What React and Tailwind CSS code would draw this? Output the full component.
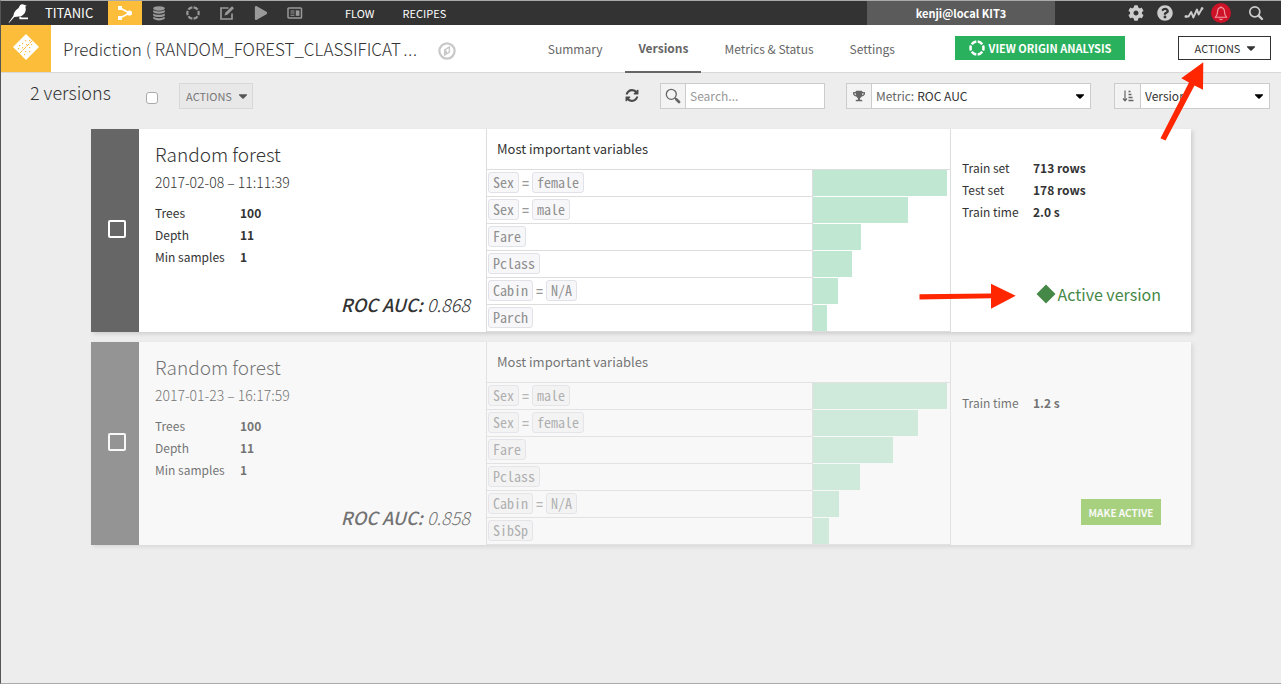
import React from "react";
import { FaTrophy, FaQuestionCircle, FaCog, FaPlay, FaCaretDown } from "react-icons/fa";

const versions = [
  {
    id: "v2",
    name: "Random forest",
    date: "2017-02-08 – 11:11:39",
    params: [["Trees", "100"], ["Depth", "11"], ["Min samples", "1"]],
    score: "0.868",
    active: true,
    training: [["Train set", "713 rows"], ["Test set", "178 rows"], ["Train time", "2.0 s"]],
    variables: [
      { name: "Sex", value: "female", size: 98 },
      { name: "Sex", value: "male", size: 69.5 },
      { name: "Fare", size: 35 },
      { name: "Pclass", size: 28.5 },
      { name: "Cabin", value: "N/A", size: 18.5 },
      { name: "Parch", size: 10.5 },
    ],
  },
  {
    id: "v1",
    name: "Random forest",
    date: "2017-01-23 – 16:17:59",
    params: [["Trees", "100"], ["Depth", "11"], ["Min samples", "1"]],
    score: "0.858",
    active: false,
    training: [["Train time", "1.2 s"]],
    variables: [
      { name: "Sex", value: "male", size: 98 },
      { name: "Sex", value: "female", size: 76.5 },
      { name: "Fare", size: 58.5 },
      { name: "Pclass", size: 34.5 },
      { name: "Cabin", value: "N/A", size: 19 },
      { name: "SibSp", size: 12 },
    ],
  },
];

function BirdLogo() {
  return (
    <svg viewBox="0 0 22 20" className="h-5 w-[22px]" fill="#fff" aria-hidden="true">
      <path d="M0.500 19.800 L5.400 12.800 C5.700 9.800 7 7.600 10.300 5.200 C11.600 4.200 11.400 1.300 14.200 1.200 C15.600 1.100 16.300 1.900 18.900 2.700 L17.300 3.600 C18.600 7.500 17.300 11 13.200 13.200 L6.300 13.900 L1.200 19.800 Z" />
      <path d="M12.200 13.500 L13.500 14.600 L20 14.600 L20 16.300 L11.400 16.300 L11.400 13.800 Z" />
    </svg>
  );
}

function FlowIcon() {
  return (
    <svg viewBox="0 0 16 16" className="size-4" fill="#fff" aria-hidden="true">
      <path d="M3 3 L12.500 8 L3 13" fill="none" stroke="#fff" strokeWidth="1.600" />
      <rect x="1" y="1" width="4" height="4" />
      <rect x="1" y="11" width="4" height="4" />
      <circle cx="12.500" cy="8" r="2.600" />
    </svg>
  );
}

function DatasetIcon() {
  return (
    <svg viewBox="0 0 14 16" className="h-[15px] w-3.5" fill="currentColor" aria-hidden="true">
      <ellipse cx="7" cy="2.600" rx="6.200" ry="2.400" />
      <path d="M0.800 4.300 C3 6.300 11 6.300 13.200 4.300 V6.400 C11.500 8.800 2.500 8.800 0.800 6.400 Z" />
      <path d="M0.800 7.900 C3 9.900 11 9.900 13.200 7.900 V10 C11.500 12.400 2.500 12.400 0.800 10 Z" />
      <path d="M0.800 11.500 C3 13.500 11 13.500 13.200 11.500 V13.400 C11.500 16 2.500 16 0.800 13.400 Z" />
    </svg>
  );
}

function AnalysisIcon({ className }) {
  return (
    <svg viewBox="0 0 16 16" className={className} fill="none" stroke="currentColor" aria-hidden="true">
      <circle cx="8" cy="8" r="6.500" strokeWidth="2.500" pathLength="60" strokeDasharray="7.800 2.200" strokeDashoffset="-6.100" />
    </svg>
  );
}

function NotebookIcon() {
  return (
    <svg viewBox="0 0 16 16" className="size-4" fill="none" stroke="currentColor" aria-hidden="true">
      <path d="M9.500 3 H2 V14 H13 V8.500" strokeWidth="1.700" />
      <path d="M5.500 10.500 L6.300 7.800 L13 1.200 L15 3.200 L8.300 9.800 Z" fill="currentColor" stroke="none" />
    </svg>
  );
}

function DashboardIcon() {
  return (
    <svg viewBox="0 0 16 12" className="h-3 w-4" fill="none" stroke="currentColor" aria-hidden="true">
      <rect x="1" y="1" width="13.500" height="10" rx="0.800" strokeWidth="1.500" />
      <path d="M3.500 4 H7.500 M3.500 6 H7.500 M3.500 8.200 H7.500" strokeWidth="1.100" />
      <rect x="8.800" y="3.400" width="3.600" height="5.400" fill="currentColor" stroke="none" />
    </svg>
  );
}

function PulseIcon() {
  return (
    <svg viewBox="0 0 20 14" className="h-3.5 w-5" fill="none" stroke="currentColor" strokeWidth="1.900" strokeLinejoin="round" strokeLinecap="round" aria-hidden="true">
      <path d="M2 10.500 L4.500 10.500 L7.200 6 L9.300 11.500 L13 3.500 L14.600 8.500 L18 2.500" />
      <path d="M1.800 10.500 h0.200 M18 2.500 h0.200" strokeWidth="2.600" />
    </svg>
  );
}

function BellIcon() {
  return (
    <svg viewBox="0 0 16 16" className="size-4" fill="none" stroke="currentColor" strokeWidth="1.100" strokeLinejoin="round" aria-hidden="true">
      <path d="M8 1.200 V2.500 M8 2.500 C5.500 2.600 4.600 4.500 4.600 6.500 C4.600 9.500 3.800 10.800 2.200 12.300 H13.800 C12.200 10.800 11.400 9.500 11.400 6.500 C11.400 4.500 10.500 2.600 8 2.500 Z" />
      <path d="M6.500 13.800 C7 14.900 9 14.900 9.500 13.800" />
    </svg>
  );
}

function SearchIcon({ className }) {
  return (
    <svg viewBox="0 0 16 16" className={className} fill="none" stroke="currentColor" strokeLinecap="round" aria-hidden="true">
      <circle cx="6.800" cy="6.800" r="5" strokeWidth="1.700" />
      <path d="M10.800 10.800 L14 14" strokeWidth="2.400" />
    </svg>
  );
}

function FilterIcon() {
  return (
    <svg viewBox="0 0 16 16" className="size-4" fill="none" stroke="currentColor" strokeLinecap="round" aria-hidden="true">
      <circle cx="6.300" cy="6.300" r="5" strokeWidth="1.300" />
      <path d="M10 10 L11 11" strokeWidth="1.300" />
      <path d="M11.500 11.500 L14 14" strokeWidth="2.800" />
    </svg>
  );
}

function ModelIcon() {
  return (
    <svg viewBox="0 0 28 28" className="size-7" aria-hidden="true">
      <path d="M14 1 L27 14 L14 27 L1 14 Z" fill="#fff" />
      <path d="M7.500 20.500 L20.500 7.500" stroke="#fbbd3a" strokeWidth="1" strokeDasharray="4 1" />
      <g fill="#fbbd3a">
        <rect x="7" y="12" width="1.200" height="1.200" />
        <rect x="10" y="10" width="1.200" height="1.200" />
        <rect x="10" y="14" width="1.200" height="1.200" />
        <rect x="13" y="7" width="1.200" height="1.200" />
        <rect x="14" y="11" width="1.200" height="1.200" />
        <rect x="17" y="7" width="1.200" height="1.200" />
        <rect x="6" y="15" width="1.200" height="1.200" />
        <rect x="13" y="18" width="1.200" height="1.200" />
        <rect x="17" y="14" width="1.200" height="1.200" />
        <rect x="19" y="11" width="1.200" height="1.200" />
        <rect x="17" y="18" width="1.200" height="1.200" />
        <rect x="12" y="21" width="1.200" height="1.200" />
      </g>
    </svg>
  );
}

function CompassIcon() {
  return (
    <svg viewBox="0 0 18 18" className="size-[18px]" fill="none" stroke="#c8c8c8" aria-hidden="true">
      <circle cx="9" cy="9" r="7.600" strokeWidth="2.200" />
      <path d="M6.600 7.800 L11.400 5 V10.200 L6.600 13 Z" strokeWidth="1.400" />
      <path d="M6.600 7.800 L9 9 L9 11.600 L6.600 13 Z" fill="#c8c8c8" stroke="none" />
    </svg>
  );
}

function RefreshIcon() {
  return (
    <svg viewBox="0 0 1536 1664" className="size-3.5" fill="#4a4a4a" aria-hidden="true">
      <path d="M1511 928q0 5-1 7-64 268-268 434.500t-478 166.500q-146 0-282.500-55t-243.500-157l-129 129q-19 19-45 19t-45-19-19-45v-448q0-26 19-45t45-19h448q26 0 45 19t19 45-19 45l-137 137q71 66 161 102t187 36q134 0 250-65t186-179q11-17 53-117 8-23 30-23h192q13 0 22.500 9.500t9.500 22.500zm25-800v448q0 26-19 45t-45 19h-448q-26 0-45-19t-19-45 19-45l138-138q-148-137-349-137-134 0-250 65t-186 179q-11 17-53 117-8 23-30 23h-199q-13 0-22.500-9.500t-9.500-22.500v-7q65-268 270-434.500t480-166.500q146 0 284 55.500t245 156.500l130-129q19-19 45-19t45 19 19 45z" />
    </svg>
  );
}

function SortIcon() {
  return (
    <svg viewBox="0 0 12 12" className="size-3" fill="none" stroke="#666" aria-hidden="true">
      <path d="M3 0.500 V10 M1 8.500 L3 10.800 L5 8.500" strokeWidth="1.200" />
      <path d="M6.500 1.500 H8.500 M6.500 4.500 H9.500 M6.500 7.500 H10.500 M6.500 10.500 H11.500" strokeWidth="1.300" />
    </svg>
  );
}

function TopBar() {
  return (
    <header className="flex h-6 items-stretch bg-[#333] text-[11px] text-white">
      <a href="#home" aria-label="Home" className="flex w-9 items-center pl-[7px]"><BirdLogo /></a>
      <a href="#project" className="flex w-[71px] items-center pl-2 text-[13px]">TITANIC</a>
      <nav aria-label="Project" className="flex text-[#999]">
        <a href="#flow" aria-label="Flow" className="grid w-[34px] place-items-center bg-[#fbbd3a]"><FlowIcon /></a>
        <a href="#datasets" aria-label="Datasets" className="grid w-[34px] place-items-center"><DatasetIcon /></a>
        <a href="#analyses" aria-label="Analyses" className="grid w-[34px] place-items-center"><AnalysisIcon className="size-3.5" /></a>
        <a href="#notebooks" aria-label="Notebooks" className="grid w-[34px] place-items-center"><NotebookIcon /></a>
        <a href="#jobs" aria-label="Jobs" className="grid w-[34px] place-items-center"><FaPlay className="size-3.5" /></a>
        <a href="#dashboard" aria-label="Dashboard" className="grid w-[34px] place-items-center"><DashboardIcon /></a>
      </nav>
      <nav aria-label="Sections" className="flex items-center gap-7 pl-[33px]">
        <a href="#flow-menu">FLOW</a>
        <a href="#recipes">RECIPES</a>
      </nav>
      <div className="ml-auto flex w-[188px] items-center justify-center bg-[#5b5b5b] font-bold">kenji@local KIT3</div>
      <div className="flex w-[226px] items-center justify-end pr-[17px] text-[#ccc]">
        <button aria-label="Administration" className="grid w-[29px] place-items-center"><FaCog className="size-4" /></button>
        <button aria-label="Help" className="grid w-[29px] place-items-center"><FaQuestionCircle className="size-4" /></button>
        <button aria-label="Activity" className="grid w-[29px] place-items-center"><PulseIcon /></button>
        <button aria-label="Notifications" className="mr-[17px] ml-[3px] grid size-5 place-items-center rounded-full bg-[#ce1228] text-[#f2a0a8]"><BellIcon /></button>
        <button aria-label="Search" className="grid w-4 place-items-center"><SearchIcon className="size-4" /></button>
      </div>
    </header>
  );
}

function Arrow({ className, children, viewBox }) {
  return (
    <svg viewBox={viewBox} className={className} fill="#ff2600" aria-hidden="true">{children}</svg>
  );
}

function TitleBar() {
  return (
    <div className="flex h-12 border-b border-[#d9d9d9] bg-white">
      <div className="grid w-[50px] shrink-0 place-items-center bg-[#fbbd3a] pb-1"><ModelIcon /></div>
      <h1 className="flex w-[375px] items-center pl-3 text-[17px] font-light whitespace-nowrap">
        Prediction ( RANDOM_FOREST_CLASSIFICAT<span className="pl-0.5 font-['Open_Sans'] text-xl">…</span>
      </h1>
      <button aria-label="Navigate" className="ml-3 pt-1"><CompassIcon /></button>
      <nav aria-label="Model" className="ml-auto flex gap-2.5 text-xs text-[#666]">
        <a href="#summary" className="flex items-center px-[13px]">Summary</a>
        <a href="#versions" aria-current="page" className="-mb-px flex items-center border-b-2 border-[#666] px-[13px] font-bold">Versions</a>
        <a href="#metrics" className="flex items-center px-[13px]">Metrics &amp; Status</a>
        <a href="#settings" className="flex items-center px-[13px]">Settings</a>
      </nav>
      <div className="ml-[47px] flex items-start pt-[11px] pr-2.5">
        <a href="#origin" className="flex h-6 w-[170px] items-center justify-center gap-1 bg-[#2ab15e] text-[11px] font-bold text-white">
          <AnalysisIcon className="size-4" />VIEW ORIGIN ANALYSIS
        </a>
        <div className="relative ml-[53px]">
          <button className="flex h-6 w-[93px] items-center justify-center gap-1 border border-[#333] bg-white pl-1 text-[11px]">
            ACTIONS<FaCaretDown className="size-3.5" />
          </button>
          <Arrow viewBox="0 0 45 80" className="pointer-events-none absolute top-[25px] right-[66px] z-10 h-20 w-[45px]">
            <path d="M43.300 1.300 L21.300 17.300 L29 21.500 L0.500 77.300 L5.500 79.500 L34.500 24.500 L43 28.700 Z" />
          </Arrow>
        </div>
      </div>
    </div>
  );
}

function Toolbar() {
  return (
    <div className="flex items-center pt-2.5 pr-[11px]">
      <h2 className="w-[145px] pb-2 pl-[29px] text-lg leading-[18px] font-light">2 versions</h2>
      <input type="checkbox" aria-label="Select all versions" className="mt-1 size-3 appearance-none rounded-[3px] border border-[#aaa] bg-white" />
      <button className="ml-[21px] flex h-[26px] w-[74px] items-center justify-center gap-1 border border-[#d9d9d9] bg-[#e8e8e8] pl-1 text-[11px] text-[#777]">
        ACTIONS<FaCaretDown className="size-3.5 text-[#555]" />
      </button>
      <button aria-label="Refresh" className="ml-auto"><RefreshIcon /></button>
      <div className="ml-[21px] flex h-[26px] w-[165px] border border-[#ccc] bg-white">
        <label htmlFor="search" aria-label="Search" className="grid w-[25px] shrink-0 place-items-center border-r border-[#ccc] bg-[#f3f3f3] text-[#666]">
          <FilterIcon />
        </label>
        <input id="search" type="text" placeholder="Search..." className="min-w-0 flex-1 px-1 text-xs outline-none placeholder:text-[#999]" />
      </div>
      <div className="ml-[21px] flex h-[26px] w-[245px] items-stretch border border-[#ccc] bg-white text-xs">
        <span className="grid w-[25px] shrink-0 place-items-center border-r border-[#ccc] bg-[#f3f3f3]"><FaTrophy className="size-3 text-[#666]" /></span>
        <label htmlFor="metric" className="flex items-center pl-1 text-[#666]">Metric:</label>
        <select id="metric" className="min-w-0 flex-1 appearance-none pl-[3px] outline-none"><option>ROC AUC</option></select>
        <FaCaretDown className="mr-[3px] size-3.5 self-center text-black" />
      </div>
      <div className="ml-[23px] flex h-[26px] w-[156px] items-stretch border border-[#ccc] bg-white text-xs">
        <span className="grid w-[26px] shrink-0 place-items-center border-r border-[#ccc] bg-[#f3f3f3]"><SortIcon /></span>
        <select aria-label="Sort by" className="min-w-0 flex-1 appearance-none pl-1 outline-none"><option>Version</option></select>
        <FaCaretDown className="mr-[3px] size-3.5 self-center text-black" />
      </div>
    </div>
  );
}

function Chip({ children }) {
  return (
    <code className="inline-block h-[21px] rounded-[3px] border border-[#e1e1e8] bg-[#f7f7f9] px-1 font-['Noto_Sans_Mono_CJK_SC','DejaVu_Sans_Mono',monospace] text-sm leading-[18px] font-normal text-[#8f8f8f]">
      {children}
    </code>
  );
}

function Facts({ rows, labelWidth }) {
  return (
    <dl className="text-xs leading-[22px]">
      {rows.map(([label, value]) => (
        <div key={label} className="flex">
          <dt className={labelWidth}>{label}</dt>
          <dd className="font-bold">{value}</dd>
        </div>
      ))}
    </dl>
  );
}

function VersionCard({ version }) {
  const frame = "grid grid-cols-[48px_minmax(0,347fr)_minmax(0,465fr)_minmax(0,240fr)] bg-white shadow-[2px_2px_4px_rgba(0,0,0,0.13)]";
  return (
    <article className={version.active ? frame : frame + " opacity-65"}>
      <div className="flex items-center justify-center bg-[#666] pb-[3px] pl-1">
        <input type="checkbox" aria-label={"Select version " + version.date} className="size-[18px] appearance-none rounded-[2px] border-2 border-white" />
      </div>
      <section className="flex flex-col px-4 pt-[13px] pb-3">
        <h3 className="text-[19px] leading-6 font-light">{version.name}</h3>
        <p className="mt-1 mb-2 text-sm leading-6 font-light">{version.date}</p>
        <Facts rows={version.params} labelWidth="w-[85px]" />
        <p className="mt-auto text-right text-lg leading-8 font-light italic">
          <span className="font-medium">ROC AUC:</span> {version.score}
        </p>
      </section>
      <section className="border-x border-[#ddd]">
        <h4 className="h-[41px] border-b border-[#ddd] pl-2.5 text-[13px] leading-10">Most important variables</h4>
        <table className="w-full table-fixed border-separate border-spacing-0" aria-label="Most important variables">
          <tbody>
            {version.variables.map((variable) => (
              <tr key={variable.name + variable.value} className="group h-[27px]">
                <td className="border-r border-b border-[#ddd] p-0 pl-px align-top leading-none">
                  <div className="flex items-center gap-[3px] pt-0.5 text-xs font-bold text-[#999]">
                    <Chip>{variable.name}</Chip>
                    {variable.value && <><span>=</span><Chip>{variable.value}</Chip></>}
                  </div>
                </td>
                <td className="w-[137px] border-b border-transparent p-0 group-last:border-[#ddd]">
                  <div className="h-[26px] bg-[#c0e7d1]" style={{ width: variable.size + "%" }} />
                </td>
              </tr>
            ))}
          </tbody>
        </table>
      </section>
      <section className="relative flex flex-col">
        <div className="flex h-[122px] items-center pl-[11px]">
          <Facts rows={version.training} labelWidth="w-[71px]" />
        </div>
        <div className="mt-auto flex justify-end pr-[30px] pb-5">
          {version.active ? (
            <p className="flex items-center gap-0.5 text-base leading-9 text-[#468847]">
              <svg viewBox="0 0 20 20" className="size-5" fill="#468847" aria-hidden="true"><path d="M10 0.500 L19.500 10 L10 19.500 L0.500 10 Z" /></svg>
              Active version
            </p>
          ) : (
            <button className="h-[26px] w-20 bg-[#83c345] text-[10px] font-bold text-white">MAKE ACTIVE</button>
          )}
        </div>
        {version.active && (
          <Arrow viewBox="0 0 98 28" className="pointer-events-none absolute right-[174px] bottom-[22px] h-7 w-[98px]">
            <path d="M0.500 12.300 L72 11.500 V1.700 L96.700 13.700 L72 26.700 V16.300 L0.500 17.500 Z" />
          </Arrow>
        )}
      </section>
    </article>
  );
}

export default function App() {
  return (
    <div className="min-h-screen border-t border-b border-l border-t-[#aaa] border-b-[#aaa] border-l-[#555] bg-[#ededed] font-['Noto_Sans_CJK_SC',sans-serif] text-[#333]">
      <TopBar />
      <TitleBar />
      <main>
        <Toolbar />
        <div className="flex flex-col gap-2.5 px-[90px] pt-5">
          {versions.map((version) => <VersionCard key={version.id} version={version} />)}
        </div>
      </main>
    </div>
  );
}
